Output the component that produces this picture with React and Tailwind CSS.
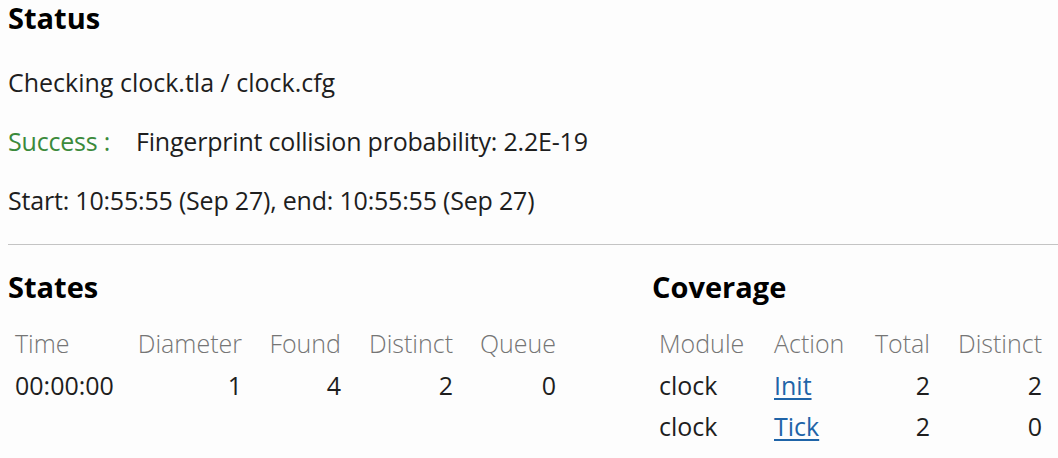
import React from "react";

const states = {
  headers: ["Time", "Diameter", "Found", "Distinct", "Queue"],
  rows: [["00:00:00", "1", "4", "2", "0"]],
};

const coverage = [
  { module: "clock", action: "Init", total: "2", distinct: "2" },
  { module: "clock", action: "Tick", total: "2", distinct: "0" },
];

const App = () => {
  return (
    <div className="min-h-screen bg-[#fdfdfd] pl-2 font-['Open_Sans',sans-serif] text-[25px] text-[#1e1e1e]">
      {/* Status */}
      <section>
        <h2 className="text-[29px] font-bold leading-[36px] text-black">Status</h2>
        <div className="mt-[17px] leading-[59px]">
          <p>Checking clock.tla / clock.cfg</p>
          <p className="tracking-[-0.2px]">
            <span className="inline-block w-[128px] text-[#3b8a3b]">Success :</span>
            <span>Fingerprint collision probability: 2.2E-19</span>
          </p>
          <p className="tracking-[-0.2px]">Start: 10:55:55 (Sep 27), end: 10:55:55 (Sep 27)</p>
        </div>
      </section>

      <hr className="mt-[14px] border-0 border-t border-[#c4c4c4]" />

      <div className="mt-6 flex">
        {/* States */}
        <section className="w-[644px] shrink-0">
          <h2 className="text-[29px] font-bold leading-[36px] text-black">States</h2>
          <table className="mt-[18px] table-fixed border-collapse">
            <thead>
              <tr className="h-[42px] text-[#757575]">
                <th className="w-[123px] pl-[7px] text-left font-light">Time</th>
                <th className="w-[118px] pr-[7px] text-right font-light">Diameter</th>
                <th className="w-[99px] pr-[7px] text-right font-light">Found</th>
                <th className="w-[112px] pr-[7px] text-right font-light">Distinct</th>
                <th className="w-[103px] pr-[7px] text-right font-light">Queue</th>
              </tr>
            </thead>
            <tbody>
              {states.rows.map((r, i) => (
                <tr key={i} className="h-[41px]">
                  <td className="pl-[7px] text-left">{r[0]}</td>
                  <td className="pr-[7px] text-right">{r[1]}</td>
                  <td className="pr-[7px] text-right">{r[2]}</td>
                  <td className="pr-[7px] text-right">{r[3]}</td>
                  <td className="pr-[7px] text-right">{r[4]}</td>
                </tr>
              ))}
            </tbody>
          </table>
        </section>

        {/* Coverage */}
        <section>
          <h2 className="text-[29px] font-bold leading-[36px] text-black">Coverage</h2>
          <table className="mt-[18px] table-fixed border-collapse">
            <thead>
              <tr className="h-[42px] text-[#757575]">
                <th className="w-[115px] pl-[7px] text-left font-light">Module</th>
                <th className="w-[95px] pl-[7px] text-left font-light">Action</th>
                <th className="w-[75px] pr-[7px] text-right font-light">Total</th>
                <th className="w-[112px] pr-[7px] text-right font-light">Distinct</th>
              </tr>
            </thead>
            <tbody>
              {coverage.map((c) => (
                <tr key={c.action} className="h-[41px]">
                  <td className="pl-[7px] text-left">{c.module}</td>
                  <td className="pl-[7px] text-left">
                    <a href="#" className="text-[#1f64a8] underline underline-offset-[3px]">
                      {c.action}
                    </a>
                  </td>
                  <td className="pr-[7px] text-right">{c.total}</td>
                  <td className="pr-[7px] text-right">{c.distinct}</td>
                </tr>
              ))}
            </tbody>
          </table>
        </section>
      </div>
    </div>
  );
};

export default App;
